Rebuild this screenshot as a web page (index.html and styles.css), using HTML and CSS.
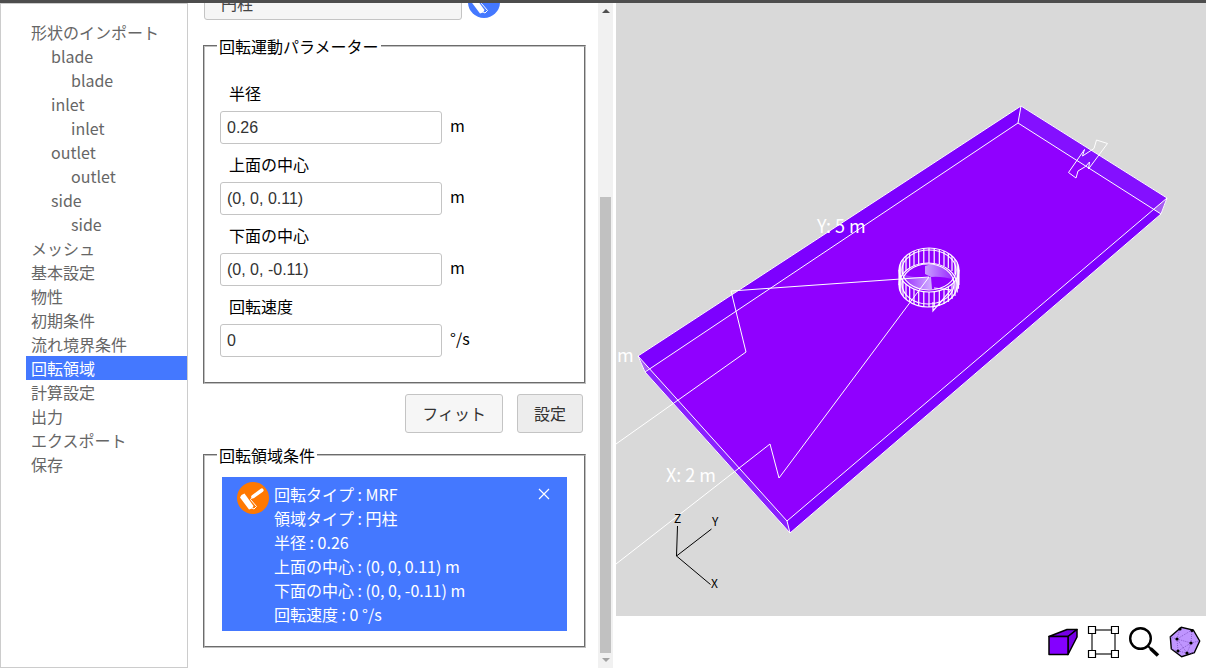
FILE: index.html
```html
<!DOCTYPE html>
<html lang="ja">
<head>
<meta charset="utf-8">
<title>回転領域</title>
<link rel="stylesheet" href="styles.css">
</head>
<body>
<svg class="defs" width="0" height="0" aria-hidden="true">
  <symbol id="roller" viewBox="0 0 32 32">
    <path d="M3 15.5 4.5 13 7.5 11.5 16.5 24 15 26.5 12 27.5Z" fill="#fff"/>
    <path d="M16 14.6 24.8 8.2" stroke="#fff" stroke-width="3.6" stroke-linecap="round"/>
    <path d="M15.5 15 13.5 17.5 19.5 24.5 17 27 15 26" fill="none" stroke="#fff" stroke-width="1"/>
  </symbol>
</svg>
<main class="app">
  <nav class="tree">
    <ul>
      <li><a href="#">形状のインポート</a>
        <ul>
          <li><a href="#">blade</a><ul><li><a href="#">blade</a></li></ul></li>
          <li><a href="#">inlet</a><ul><li><a href="#">inlet</a></li></ul></li>
          <li><a href="#">outlet</a><ul><li><a href="#">outlet</a></li></ul></li>
          <li><a href="#">side</a><ul><li><a href="#">side</a></li></ul></li>
        </ul>
      </li>
      <li><a href="#">メッシュ</a></li>
      <li><a href="#">基本設定</a></li>
      <li><a href="#">物性</a></li>
      <li><a href="#">初期条件</a></li>
      <li><a href="#">流れ境界条件</a></li>
      <li><a href="#" class="selected" aria-current="page">回転領域</a></li>
      <li><a href="#">計算設定</a></li>
      <li><a href="#">出力</a></li>
      <li><a href="#">エクスポート</a></li>
      <li><a href="#">保存</a></li>
    </ul>
  </nav>

  <section class="panel">
    <form class="form">
      <div class="type-row">
        <select aria-label="領域タイプ"><option>円柱</option></select>
        <button type="button" class="round" aria-label="領域"><svg width="32" height="32"><use href="#roller"/></svg></button>
      </div>
      <fieldset class="params">
        <legend>回転運動パラメーター</legend>
        <div class="field"><label for="radius">半径</label><div class="entry"><input id="radius" type="text" value="0.26"><span>m</span></div></div>
        <div class="field"><label for="top">上面の中心</label><div class="entry"><input id="top" type="text" value="(0, 0, 0.11)"><span>m</span></div></div>
        <div class="field"><label for="bottom">下面の中心</label><div class="entry"><input id="bottom" type="text" value="(0, 0, -0.11)"><span>m</span></div></div>
        <div class="field"><label for="speed">回転速度</label><div class="entry"><input id="speed" type="text" value="0"><span>°/s</span></div></div>
      </fieldset>
      <div class="actions">
        <button type="button" class="btn">フィット</button>
        <button type="button" class="btn primary">設定</button>
      </div>
      <fieldset class="conditions">
        <legend>回転領域条件</legend>
        <div class="card">
          <span class="badge"><svg width="32" height="32" aria-hidden="true"><use href="#roller"/></svg></span>
          <ul class="details">
            <li>回転タイプ : MRF</li>
            <li>領域タイプ : 円柱</li>
            <li>半径 : 0.26</li>
            <li>上面の中心 : (0, 0, 0.11) m</li>
            <li>下面の中心 : (0, 0, -0.11) m</li>
            <li>回転速度 : 0 °/s</li>
          </ul>
          <button type="button" class="close" aria-label="削除"><svg width="12" height="12" viewBox="0 0 12 12"><path d="M1 1 11 11M11 1 1 11" stroke="#fff" stroke-width="1.2"/></svg></button>
        </div>
      </fieldset>
    </form>
    <div class="scrollbar" aria-hidden="true">
      <i class="arrow up"></i>
      <i class="thumb"></i>
      <i class="arrow down"></i>
    </div>
  </section>

  <section class="view">
    <svg class="scene" viewBox="616 3 590 613" preserveAspectRatio="xMinYMin slice">
      <defs>
        <linearGradient id="hubA" x1="0" y1="0" x2="1" y2="0"><stop offset="0" stop-color="#c9a0ff"/><stop offset="1" stop-color="#9620ff"/></linearGradient>
        <linearGradient id="hubB" x1="0" y1="0" x2="1" y2="0"><stop offset="0" stop-color="#9a2aff"/><stop offset="1" stop-color="#d0b0ff"/></linearGradient>
        <g id="ribs">
          <path d="M5.2-21.7v15M10.3-20.7v15M15-19.1v15M19.3-16.9v15M23-14.1v15M26-11v15M28.2-7.5v15M29.5-3.8v15M30 0v15M29.5 3.8v15M28.2 7.5v15M26 11v15M23 14.1v15M19.3 16.9v15M15 19.1v15M10.3 20.7v15M5.2 21.7v15"/>
        </g>
      </defs>
      <path d="M638 356 1021 106 1167 198 1161 214 790 533 645 372Z" fill="#9000ff"/>
      <path d="M638 356 1021 106 1018 123 645 372Z" fill="#7d00ff"/>
      <path d="M1021 106 1167 198 1153 209 1018 123Z" fill="#8410ff"/>
      <path d="M638 356 787 521 790 533 645 372Z" fill="#8a20ff"/>
      <path d="M1167 198 1153 209 787 521 790 533 1161 214Z" fill="#7d00ff"/>
      <path d="M1167 198 1153 209 1161 214ZM638 356 649 368 645 372Z" fill="#a65cf0"/>
      <path d="M925 266 Q937 262 949 272 L955 280 Q942 276 931 277 L925 274Z" fill="url(#hubA)"/>
      <path d="M903 274 Q915 279 931 277 L932 289 Q918 292 909 285Z" fill="url(#hubB)"/>
      <g fill="none" stroke="#fff" stroke-width="1">
        <path d="M638 356 1021 106 1167 198 1161 214 790 533 645 372ZM1021 106 1018 123 645 372M1018 123 1161 214M1167 198 787 521 638 356M787 521 790 533"/>
        <path d="M616 444 746 352 731 291 929 277 779 478 770 444 616 564"/>
        <path d="M1096.500 140 1107.500 143.500 1088.500 169 1089.500 162 1085.500 166.500 1078 171 1076 178 1068.500 172.500 1084.500 149.500 1082.500 156 1094 148.500Z"/>
      </g>
      <g transform="translate(929 270)" fill="none" stroke="#fff" stroke-width="1.2">
        <ellipse rx="30" ry="22"/>
        <ellipse rx="27" ry="20"/>
        <ellipse cx="-1" cy="15" rx="29" ry="22"/>
        <ellipse cx="-1" cy="14" rx="26" ry="20"/>
        <path d="M0-22v15M0 22v15"/>
        <use href="#ribs"/>
        <use href="#ribs" transform="scale(-1 1)"/>
        <path d="M5 18 22 20 4 41 4 32"/>
      </g>
      <g class="dimension">
        <text x="817" y="233">Y: 5 m</text>
        <text x="666" y="482">X: 2 m</text>
        <text x="617" y="362">m</text>
      </g>
      <g class="axis">
        <path d="M677.500 526 676.500 556 711.500 529M676.500 556 710.500 584.500" fill="none" stroke="#000"/>
        <text x="674" y="523">Z</text>
        <text x="712" y="526">Y</text>
        <text x="711" y="588">X</text>
      </g>
    </svg>
    <div class="tools">
      <button type="button" aria-label="立方体表示"><svg width="32" height="32" viewBox="0 0 32 32" stroke="#000" stroke-width="1.500" stroke-linejoin="round" fill="#8400ff"><path d="M3 10.500 21 3.500H31L22 10.500Z" fill="#7600e6"/><path d="M22 10.500 31 3.500V11L22 28.500Z" fill="#7600e6"/><path d="M3 10.500H22V28.500H3Z"/></svg></button>
      <button type="button" aria-label="境界ボックス"><svg width="32" height="32" viewBox="0 0 32 32" fill="#fff" stroke="#000"><path d="M5 4H28V28H5Z" stroke="#444" stroke-width="1.500"/><path d="M1.500.5h7v7h-7zM24.500.5h7v7h-7zM1.500 24.500h7v7h-7zM24.500 24.500h7v7h-7z" stroke-width="1.200"/></svg></button>
      <button type="button" aria-label="拡大"><svg width="32" height="32" viewBox="0 0 32 32" fill="none" stroke="#000"><circle cx="12.500" cy="12.500" r="10.300" stroke-width="2.400"/><path d="M19.500 19.500 23 23" stroke-width="2"/><path d="M22.500 22.500 30 29.500" stroke-width="3.600"/></svg></button>
      <button type="button" aria-label="メッシュ表示"><svg width="32" height="32" viewBox="0 0 32 32"><path d="M1.300 10.700 12.300 1.300 24.300 4 30.700 15 25.300 26.700 12.700 30.700 2.300 23Z" fill="#bf95ff" stroke="#000" stroke-width="1.400"/><path d="M8 13 11 2M8 13 23 4M8 13 22 17M8 13 9 25M8 13 1 11M22 17 23 4M22 17 30 15M22 17 18 27M22 17 9 25M9 25 18 27M9 25 2 23M18 27 25 27M8 13 18 27" fill="none" stroke="#7446b8" stroke-width=".7" stroke-dasharray="1 1"/><g><circle cx="8" cy="13" r="1.600"/><circle cx="22" cy="17" r="1.600"/><circle cx="9" cy="25" r="1.600"/><circle cx="18" cy="27" r="1.600"/><circle cx="11" cy="3" r="1.600"/><circle cx="23" cy="4.500" r="1.600"/></g></svg></button>
    </div>
  </section>
</main>
</body>
</html>
```
FILE: styles.css
```css
* {
  box-sizing: border-box;
}

body {
  margin: 0;
  background: #fff;
  color: #000;
  font: 16px/24px "Noto Sans CJK JP", sans-serif;
}

ul {
  margin: 0;
  padding: 0;
  list-style: none;
}

button {
  padding: 0;
  border: 0;
  background: none;
  font: inherit;
}

svg {
  display: block;
}

.defs {
  position: absolute;
}

.app {
  display: flex;
  height: 100vh;
  border-top: 3px solid #4d4d4d;
}

/* Navigation tree */
.tree {
  flex: 0 0 188px;
  padding: 16px 0 0 25px;
  border: 1px solid #ccc;
}

.tree a {
  display: block;
  padding-left: 5px;
  color: #666;
  text-decoration: none;
}

.tree ul ul {
  padding-left: 20px;
}

.tree .selected {
  background: #4478ff;
  color: #fff;
}

/* Form panel */
.panel {
  flex: 0 0 428px;
  display: flex;
  padding-right: 3px;
}

.form {
  flex: 1;
  min-width: 0;
  display: flex;
  flex-direction: column;
  justify-content: flex-end;
  overflow: hidden;
  padding: 0 12px 20px 15px;
}

.type-row {
  display: flex;
  gap: 6px;
  margin: 0 1px 14px;
}

.type-row select {
  appearance: none;
  width: 258px;
  height: 34px;
  padding: 0 16px;
  border: 1px solid #c4c4c4;
  border-radius: 3px;
  background: #f5f5f5;
  color: #444;
  font: inherit;
}

.round {
  width: 32px;
  height: 32px;
  border-radius: 50%;
  background: #4478ff;
}

fieldset {
  margin: 0;
  border: 2px groove #c0c0c0;
}

legend {
  padding: 0 2px;
}

.params {
  padding: 23px 15px 25px;
}

.field {
  margin-bottom: 8px;
}

.field:last-child {
  margin-bottom: 0;
}

.field label {
  display: block;
  margin-bottom: 6px;
  padding-left: 9px;
}

.params legend {
  margin-left: -3px;
}

.conditions legend {
  margin-left: -5px;
}

.entry {
  display: flex;
  align-items: flex-start;
  gap: 8px;
}

.entry span {
  line-height: 29px;
}

.entry input {
  width: 222px;
  height: 33px;
  padding: 0 6px;
  border: 1px solid #c4c4c4;
  border-radius: 3px;
  background: #fff;
  color: #333;
  font: 16px "Liberation Sans", sans-serif;
}

.actions {
  display: flex;
  justify-content: flex-end;
  gap: 14px;
  padding: 10px 3px 10px 0;
}

.btn {
  height: 39px;
  padding: 0 16px 2px;
  border: 1px solid #c4c4c4;
  border-radius: 3px;
  background: #f6f6f6;
  color: #333;
}

.btn.primary {
  background: #ededed;
}

.conditions {
  padding: 10px 17px 15px;
}

.card {
  display: flex;
  align-items: flex-start;
  gap: 5px;
  padding: 5px 17px 5px 15px;
  background: #4478ff;
  color: #fff;
}

.badge {
  border-radius: 50%;
  background: #ff7800;
}

.details {
  flex: 1;
}

.close {
  margin-top: 6px;
}

/* Scrollbar */
.scrollbar {
  flex: 0 0 15px;
  display: flex;
  flex-direction: column;
  align-items: center;
  padding: 6px 2px;
  background: #f1f1f1;
}

.arrow {
  border: 4px solid transparent;
}

.up {
  border-top: 0;
  border-bottom-color: #505050;
}

.down {
  margin-top: 5px;
  border-bottom: 0;
  border-top-color: #a3a3a3;
}

.thumb {
  width: 11px;
  height: 456px;
  margin-top: auto;
  background: #c1c1c1;
}

/* 3D view */
.view {
  flex: 1;
  min-width: 0;
  display: flex;
  flex-direction: column;
}

.scene {
  flex: 1;
  width: 100%;
  min-height: 0;
  background: #d9d9d9;
}

.dimension {
  fill: #fff;
  font-size: 18px;
}

.axis {
  font-size: 12px;
}

.tools {
  display: flex;
  justify-content: flex-end;
  gap: 9px;
  padding: 10px 5px;
}
```
